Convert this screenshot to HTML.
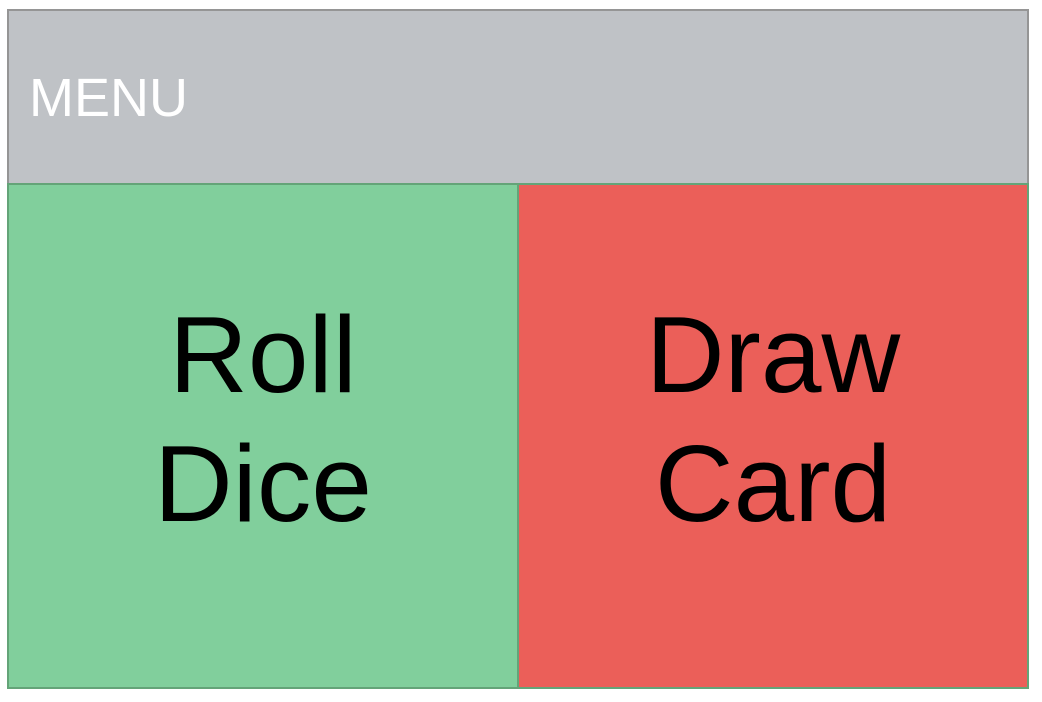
<!DOCTYPE html>
<html><head><style>
body{margin:0;width:1042px;height:702px;background:#fff;position:relative;overflow:hidden;font-family:"Liberation Sans",sans-serif}
.h{position:absolute;left:7px;top:9px;width:1018px;height:172px;background:#bfc2c6;border:2px solid #959595}
.m{position:absolute;left:29px;top:72px;font-size:54px;line-height:53px;color:#fff}
.p{position:absolute;top:183px;height:502px;border:2px solid #64a478;box-sizing:content-box}
.g{left:7px;width:508px;background:#81cf9c}
.r{left:517px;width:508px;background:#eb5f59}
.t{position:absolute;left:0;right:0;top:106px;text-align:center;font-size:109px;line-height:129px;color:#000}
</style></head><body>
<div class="h"></div>
<div class="m">MENU</div>
<div class="p g"><div class="t">Roll<br>Dice</div></div>
<div class="p r"><div class="t">Draw<br>Card</div></div>
</body></html>
